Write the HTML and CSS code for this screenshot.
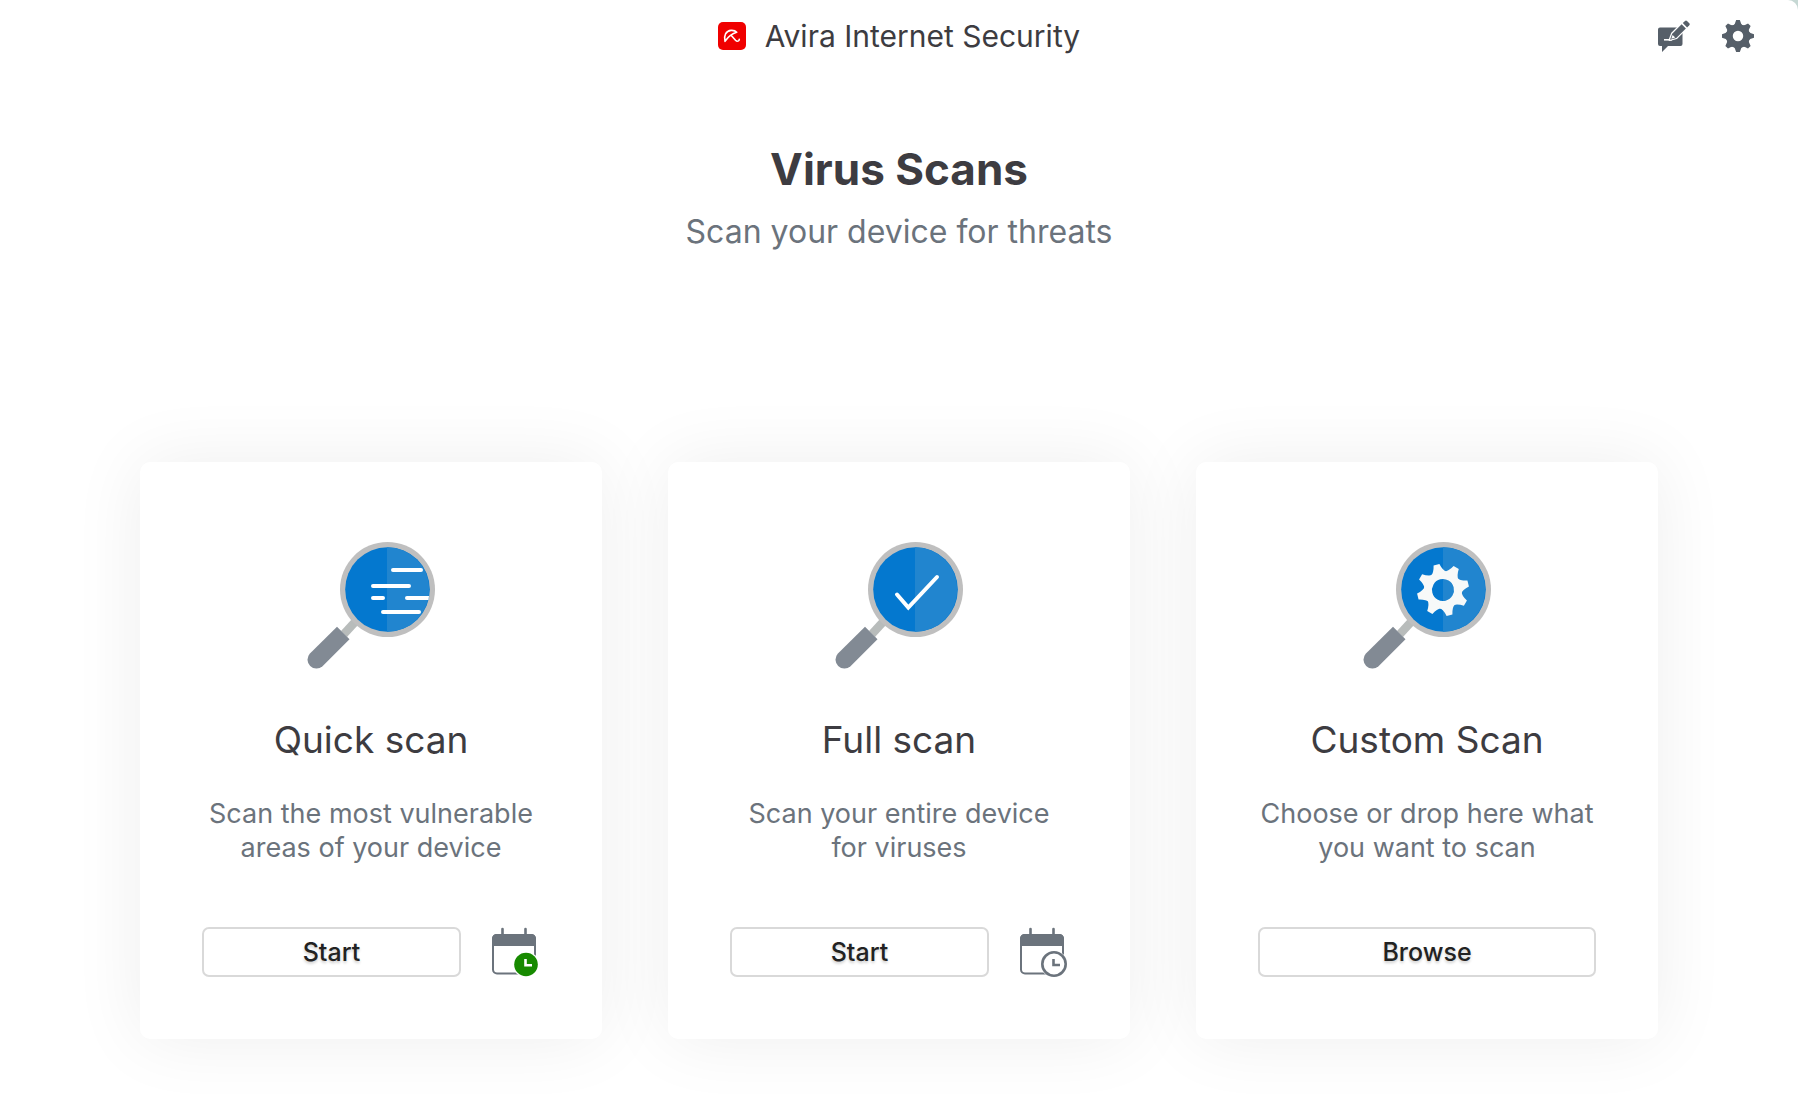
FILE: index.html
```html
<!DOCTYPE html>
<html lang="en">
<head>
    <meta charset="UTF-8">
    <meta name="viewport" content="width=device-width, initial-scale=1.0">
    <title>Avira Internet Security</title>
    <link rel="stylesheet" href="styles.css">
</head>
<body>
    <!-- Shared shapes -->
    <svg class="defs" aria-hidden="true">
        <defs>
            <g id="lens">
                <path d="M45 77 L51 83 L40 95 L34 89 Z" fill="#b8bcbb"/>
                <path d="M30 84.700 L42.500 97.300 L15.500 124.300 A9 9 0 0 1 2.700 111.700 Z" fill="#828a94"/>
                <circle cx="80.500" cy="47.500" r="47.500" fill="#bfbfbf"/>
                <circle cx="80.500" cy="47.500" r="42.300" fill="#0478cf"/>
                <path d="M80 5.200 A42.300 42.300 0 0 1 80 89.800 Z" fill="#2185cf"/>
            </g>
            <path id="tooth" d="M-8.500 -16 Q-4.500 -19 -3 -26 H3 Q4.500 -19 8.500 -16 Z"/>
            <g id="gear">
                <use href="#tooth"/>
                <use href="#tooth" transform="rotate(45)"/>
                <use href="#tooth" transform="rotate(90)"/>
                <use href="#tooth" transform="rotate(135)"/>
                <use href="#tooth" transform="rotate(180)"/>
                <use href="#tooth" transform="rotate(225)"/>
                <use href="#tooth" transform="rotate(270)"/>
                <use href="#tooth" transform="rotate(315)"/>
            </g>
            <g id="calendar">
                <path d="M10.500 1 V8 M33.500 1 V8" fill="none" stroke="#6b737c" stroke-width="2.600" stroke-linecap="round"/>
                <rect x="1" y="7" width="42" height="38.500" rx="4" fill="none" stroke="#6b737c" stroke-width="2"/>
                <path d="M0 18 V11 Q0 6 5 6 H39 Q44 6 44 11 V18 Z" fill="#6b737c"/>
            </g>
        </defs>
    </svg>

    <div class="window">
        <header>
            <div class="brand">
                <svg class="logo" viewBox="0 0 28 28" aria-hidden="true">
                    <rect width="28" height="28" rx="5" fill="#f00000"/>
                    <path d="M7 19.300 C5.500 14 8 8.700 13 8.400 C15.500 8.200 17.500 8.900 18.700 10.300 C14 11.500 10 15 7 19.300 M13.300 13.500 L17.500 18.300 Q19 19.800 20.500 18.900 Q21.300 18.300 21.300 17.200" fill="none" stroke="#fff" stroke-width="1.600" stroke-linecap="round" stroke-linejoin="round"/>
                </svg>
                <span>Avira Internet Security</span>
            </div>
            <div class="tools">
                <button class="icon-button" aria-label="Feedback">
                    <svg width="32" height="32" viewBox="0 0 32 32" fill="#565f69">
                        <path d="M2 7.500 H22.500 Q24.500 7.500 24.500 9.500 V24 Q24.500 26 22.500 26 H10 L4 32 V26 H2 Q0 26 0 24 V9.500 Q0 7.500 2 7.500 Z"/>
                        <path d="M6 19.800 H14" stroke="#fff" stroke-width="1.600"/>
                        <path d="M11.500 20 L14 13.500 L27.500 0 L32 4.500 L18.500 18 Z" stroke="#fff" stroke-width="2" stroke-linejoin="round" fill="#fff"/>
                        <path d="M12 19.700 L14.200 13.700 L23.600 4.300 L27.900 8.600 L18.300 18 Z"/>
                        <path d="M24.800 3.100 L27 0.900 Q28 0 29 0.900 L31.300 3.200 Q32.200 4.200 31.300 5.200 L29.100 7.400 Z"/>
                        <path d="M13.300 18.700 L14.600 15 L17.200 17.500 Z" fill="#fff"/>
                    </svg>
                </button>
                <button class="icon-button" aria-label="Settings">
                    <svg width="32" height="32" viewBox="-26 -26 52 52" fill="#565f69">
                        <use href="#gear"/>
                        <circle r="14" fill="none" stroke="#565f69" stroke-width="11"/>
                    </svg>
                </button>
            </div>
        </header>

        <main>
            <h1>Virus Scans</h1>
            <p class="subtitle">Scan your device for threats</p>

            <div class="cards">
                <section class="card">
                    <svg class="picture" viewBox="0 0 128 127" aria-hidden="true">
                        <use href="#lens"/>
                        <path d="M86 28 H114 M66 44 H102 M66 56 H76 M76 70 H112" stroke="#fff" stroke-width="4" stroke-linecap="round"/>
                        <path d="M122 54 H100 A2 2 0 0 0 100 58 H121.500 Z" fill="#fff"/>
                    </svg>
                    <h2>Quick scan</h2>
                    <p>Scan the most vulnerable<br>areas of your device</p>
                    <div class="actions">
                        <button class="button">Start</button>
                        <button class="icon-button" aria-label="Schedule quick scan">
                            <svg width="48" height="50" viewBox="0 -1 48 50">
                                <use href="#calendar"/>
                                <circle cx="34" cy="36.500" r="13" fill="#fff"/>
                                <circle cx="34" cy="36.500" r="11.800" fill="#178a00"/>
                                <path d="M33.500 31 V37.300 H40" fill="none" stroke="#fff" stroke-width="2.600"/>
                            </svg>
                        </button>
                    </div>
                </section>

                <section class="card">
                    <svg class="picture" viewBox="0 0 128 127" aria-hidden="true">
                        <use href="#lens"/>
                        <path d="M62 52.500 L73.300 65.500 L102 35" fill="none" stroke="#fff" stroke-width="4" stroke-linecap="round"/>
                    </svg>
                    <h2>Full scan</h2>
                    <p>Scan your entire device<br>for viruses</p>
                    <div class="actions">
                        <button class="button">Start</button>
                        <button class="icon-button" aria-label="Schedule full scan">
                            <svg width="48" height="50" viewBox="0 -1 48 50">
                                <use href="#calendar"/>
                                <circle cx="34" cy="36" r="13.500" fill="#fff"/>
                                <circle cx="34" cy="36" r="11.700" fill="#fff" stroke="#6b737c" stroke-width="2.600"/>
                                <path d="M33.500 31 V37 H40" fill="none" stroke="#6b737c" stroke-width="2.600"/>
                            </svg>
                        </button>
                    </div>
                </section>

                <section class="card">
                    <svg class="picture" viewBox="0 0 128 127" aria-hidden="true">
                        <use href="#lens"/>
                        <g transform="translate(80 48) rotate(-14.500)" fill="#f7f9f9">
                            <use href="#gear"/>
                            <circle r="15" fill="none" stroke="#f7f9f9" stroke-width="8"/>
                        </g>
                    </svg>
                    <h2>Custom Scan</h2>
                    <p>Choose or drop here what<br>you want to scan</p>
                    <div class="actions">
                        <button class="button">Browse</button>
                    </div>
                </section>
            </div>
        </main>
    </div>
</body>
</html>
```
FILE: styles.css
```css
* {
    box-sizing: border-box;
}
body {
    margin: 0;
    background-color: #c6d8d4;
    font-family: Inter, "Liberation Sans", sans-serif;
    color: #3d3c41;
}
h1, h2, p {
    margin: 0;
}
.defs {
    position: absolute;
    width: 0;
    height: 0;
}
.window {
    min-height: 100vh;
    background-color: #fff;
    border-top-right-radius: 10px;
    overflow: hidden;
}

/* Title bar */
header {
    display: grid;
    grid-template-columns: 1fr auto 1fr;
    align-items: center;
    height: 72px;
    padding: 0 44px;
}
.brand {
    grid-column: 2;
    display: flex;
    align-items: center;
    gap: 19px;
    font-size: 30px;
    line-height: 36px;
}
.logo {
    width: 28px;
    height: 28px;
}
.tools {
    display: flex;
    justify-content: flex-end;
    gap: 32px;
}
.icon-button {
    padding: 0;
    border: 0;
    background: none;
    cursor: pointer;
}
.icon-button svg {
    display: block;
}

/* Page heading */
main {
    text-align: center;
}
h1 {
    padding-top: 68px;
    font-size: 44px;
    font-weight: 700;
    line-height: 58px;
}
.subtitle {
    margin-top: 14px;
    font-size: 32px;
    line-height: 40px;
    color: #6b737c;
}

/* Scan cards */
.cards {
    display: grid;
    grid-template-columns: repeat(3, 462px);
    justify-content: center;
    gap: 66px;
    margin-top: 210px;
}
.card {
    display: flex;
    flex-direction: column;
    align-items: center;
    padding: 80px 62px 62px;
    border-radius: 10px;
    background-color: #fff;
    box-shadow: 0 0 72px rgba(0, 0, 0, 0.07);
}
.picture {
    width: 128px;
    height: 127px;
}
h2 {
    margin-top: 46px;
    font-size: 37px;
    font-weight: 400;
    line-height: 50px;
}
.card p {
    margin-top: 32px;
    font-size: 27px;
    line-height: 34px;
    white-space: nowrap;
    color: #6b737c;
}
.actions {
    display: flex;
    align-items: center;
    align-self: stretch;
    gap: 31px;
    margin-top: 62px;
}
.button {
    flex: 1;
    height: 50px;
    border: 2px solid #d9d9d9;
    border-radius: 7px;
    background-color: #fff;
    font-family: inherit;
    font-size: 25px;
    font-weight: 500;
    color: #222;
    text-shadow: 0 2px 3px rgba(0, 0, 0, 0.2);
    cursor: pointer;
}
```
